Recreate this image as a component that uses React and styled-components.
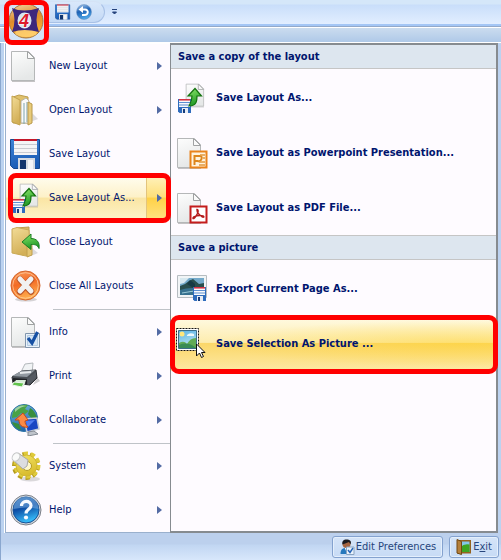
import React from "react";
import styled, { createGlobalStyle } from "styled-components";

const Paper = () => (
  <g>
    <path d="M2 31.5h23" stroke="#8a8a8a" strokeOpacity=".5" />
    <path d="M1.5 1.5h17l6 6v23h-23z" fill="url(#paperFill)" stroke="#b5b7b8" />
    <path d="M17.5 1.5v7h7z" fill="#fafafa" stroke="#a0a2a3" />
  </g>
);

const Floppy = () => (
  <g>
    <path d="M.5 1.5h29v29h-26l-3-3z" fill="url(#floppyFill)" stroke="#164a91" />
    <path d="M4 1h23v16H4z" fill="#f4f4f6" />
    <path d="M4 1h23v2H4z" fill="#c4162a" />
    <path d="M4 6.5h23M4 10.5h23M4 14.5h23" stroke="#c9cbd2" />
    <path d="M8 20h17v11H8z" fill="#d5dae2" />
    <path d="M10 22h6v9h-6z" fill="#12356e" />
    <path d="M18 22h5v9h-5z" fill="#f4f5f8" />
  </g>
);

const SmallFloppy = () => (
  <g>
    <path d="M0 0h13v14H1.500L0 12.500z" fill="#2f6cbd" />
    <path d="M1 0h11v8H1z" fill="#fafafc" />
    <path d="M1 .8h11" stroke="#d0283a" strokeWidth="1.500" />
    <path d="M1 3.500h11M1 6h11" stroke="#5d8fd0" />
    <path d="M4 9h6v5H4z" fill="#e7ecf4" />
    <path d="M5 10h2v4H5z" fill="#163c7c" />
  </g>
);

const NewIcon = () => <Paper />;

const OpenIcon = () => (
  <g>
    <path d="M20 28l8-3-6-6z" fill="#777" opacity=".25" />
    <path d="M3 3l6-2 9 2v26H3z" fill="#e0c06c" stroke="#bd9d4e" />
    <path d="M11 7l5-3 3 3v22h-8z" fill="#fafafa" stroke="#b6b3a8" />
    <path d="M14 9v21M17 8v20" stroke="#7da4ad" />
    <path d="M2 2l8 4v25l-8-3z" fill="url(#folderFill)" stroke="#c2a14e" />
    <path d="M18 8l4 2v19l-4 2z" fill="#e8ca79" stroke="#b9984a" />
  </g>
);

const SaveAsIcon = () => (
  <g>
    <g transform="translate(9 1) scale(.76)"><Paper /></g>
    <g transform="translate(2 17)"><SmallFloppy /></g>
    <path
      d="M13 24c8 0 8-6 8-10h4.500L19 6.500 12 14h4c0 5-1 7-3 10z"
      fill="url(#greenFill)"
      stroke="#14720f"
      strokeWidth="1.200"
    />
  </g>
);

const CloseIcon = () => (
  <g>
    <path d="M21 30l7-3-6-5z" fill="#777" opacity=".25" />
    <path d="M6 2l13-1v26l-6 2-7-2z" fill="#d9b862" stroke="#bd9b4c" />
    <path d="M2 3l5-1.500 12 2.500 1 25-4 1L2 27z" fill="url(#folderFill)" stroke="#c9aa58" />
    <path d="M17 20l5-2v11l-5 2z" fill="#e3c471" stroke="#c09f4d" />
    <path
      d="M12 16l9-8v4.500c6 0 9 4 8 10-2-4-4-4-8-4v5z"
      fill="url(#greenFill)"
      stroke="#1c7d24"
    />
  </g>
);

const CloseAllIcon = () => (
  <g>
    <ellipse cx="16" cy="29.500" rx="11" ry="2" fill="#999" opacity=".4" />
    <circle cx="15.500" cy="15.500" r="14.500" fill="url(#orangeFill)" stroke="#d3642c" />
    <circle cx="15.500" cy="15.500" r="12.800" fill="none" stroke="#ffd2ab" strokeOpacity=".7" />
    <path d="M10 9.500l11 12M21 9.500l-11 12" stroke="#b9552a" strokeWidth="6.500" strokeLinecap="round" />
    <path d="M10 9l11 12M21 9L10 21" stroke="#f2f2f2" strokeWidth="5" strokeLinecap="round" />
  </g>
);

const InfoIcon = () => (
  <g>
    <Paper />
    <path d="M15.500 17.500h14v14h-14z" fill="#eaf2fa" stroke="#8296ad" />
    <path d="M17.500 19.500h10v10h-10z" fill="#d7e6f5" stroke="#b4cbe1" />
    <path d="M18 22l4 5 5.500-11" fill="none" stroke="#1650a4" strokeWidth="3.200" />
  </g>
);

const PrintIcon = () => (
  <g>
    <path d="M23 25l7-4-3-4z" fill="#888" opacity=".4" />
    <path d="M11 12l4-8 8-1-1 11z" fill="#f1f3f5" stroke="#b4b8bc" />
    <path d="M2 17l10-6 14-1 1 8-7 7-17-2z" fill="#4b5057" stroke="#2d3035" />
    <path d="M2 16l9-5 14-1-8 7z" fill="#9299a1" />
    <path d="M10 13l11-1" stroke="#e7eaec" strokeWidth="2" />
    <path d="M3 18l14 1v5L3 22z" fill="#202226" />
    <path d="M17 19l9-7v6l-8 7z" fill="#555a62" />
    <path d="M6 20h10l-2 6-11-1z" fill="#d8ecd8" />
    <path d="M4 22l10 1-2 4-10-2z" fill="#62c34e" stroke="#eef5ee" />
  </g>
);

const CollaborateIcon = () => (
  <g>
    <circle cx="14" cy="14" r="13.500" fill="url(#globeFill)" stroke="#2c72a5" />
    <path d="M5 5c4-4 9-5 13-4l-3 4 4 2-5 4-3-2-4 4-5 1c0-4 1-7 3-9z" fill="#4aa246" />
    <path d="M20 4c5 3 7 8 7 12l-5-1-4-5zM2 18l7 2 2 6c-5-1-8-5-9-8z" fill="#388e3d" />
    <path d="M5 5q5-5 12-3-6 0-12 6z" fill="#c3e3c8" opacity=".7" />
    <path d="M14 15l13-1 2 11-12 3z" fill="#1946c3" stroke="#c7ced8" strokeWidth="1.500" />
    <path d="M16 17l9-1-8 8z" fill="#517df0" />
    <path d="M18 28l6-1 4 3-10 2z" fill="#bfc4cb" stroke="#848a94" />
    <path d="M5 16l8-7 5 7-3 1c0 3 1 4 3 6-6 1-9-2-9-7z" fill="#fb8a45" stroke="#c94a17" />
  </g>
);

const SystemIcon = () => (
  <g>
    <ellipse cx="20" cy="29" rx="10" ry="2.500" fill="#999" opacity=".35" />
    <circle cx="16" cy="16" r="11.500" fill="none" stroke="#b59b1d" strokeWidth="5" strokeDasharray="4 3.200" />
    <circle cx="17" cy="15" r="11" fill="none" stroke="#dfca3a" strokeWidth="5" strokeDasharray="4.100 2.800" />
    <circle cx="16.500" cy="15.500" r="10.500" fill="url(#gearFill)" stroke="#cfb632" />
    <circle cx="17" cy="16" r="4.500" fill="#fdf7cc" stroke="#b49b23" />
    <path d="M3 10l5-7 10 7-1 6-4 3z" fill="#dcdde0" stroke="#aaa" />
    <ellipse cx="6" cy="7" rx="3.500" ry="4.500" fill="#fafafa" stroke="#c4c5c7" transform="rotate(35 6 7)" />
  </g>
);

const HelpIcon = () => (
  <g>
    <circle cx="16" cy="16" r="15" fill="#d4d8df" stroke="#7b8089" />
    <circle cx="16" cy="16" r="13" fill="url(#helpFill)" stroke="#174f93" />
    <path d="M3.500 15a12.500 12.500 0 0125 0q-12-3-25 0z" fill="#82b3e4" opacity=".5" />
    <path d="M11.500 12c0-6 9.500-6 9.500-.5 0 4-5 3.500-5 8" fill="none" stroke="#f7faff" strokeWidth="3.200" />
    <circle cx="16" cy="23.500" r="2.100" fill="#f7faff" />
  </g>
);

const PptIcon = () => (
  <g>
    <Paper />
    <path d="M14.500 14.500h16v16h-16z" fill="#fff3df" stroke="#e9831c" strokeWidth="2" />
    <path d="M18.500 28v-9h5q3 0 2 3t-4 2h-2" fill="none" stroke="#dd861d" strokeWidth="2" />
    <path d="M24 18h5M27 21h2M23 25h6M23 28h6" stroke="#e2983c" strokeWidth="1.500" />
  </g>
);

const PdfIcon = () => (
  <g>
    <Paper />
    <path d="M14.500 14.500h16v16h-16z" fill="#fff" stroke="#c41d1d" strokeWidth="2" />
    <path
      d="M21 17.500c2 0 1 4-1 6.500-2 3-3 3-3 2 0-2 7-3 10-2 2 1 0 2-2 0-3-2-4-5-4-6.500z"
      fill="none"
      stroke="#b31b1b"
      strokeWidth="1.500"
    />
  </g>
);

const ExportIcon = () => (
  <g>
    <path d="M1.500 2.500h29v22h-29z" fill="#f1f4f6" stroke="#b6bcc1" />
    <path d="M4 5h24v17H4z" fill="#74a9ca" />
    <path d="M4 5h9l-5 5-4 1z" fill="#d7e8ef" />
    <path d="M4 13l5-2 4-3 4-2 6 5 5-1v7H4z" fill="#294e4d" />
    <path d="M11 11l3-4 5 4v5z" fill="#173a45" />
    <path d="M4 17q12-4 24 0v5H4z" fill="#37718f" />
    <path d="M6 20l12-2" stroke="#9dcbd9" />
    <g transform="translate(17 14)"><SmallFloppy /></g>
  </g>
);

const SelectionIcon = () => (
  <g transform="translate(-1 -1)">
    <path d="M1.500 1.500h22v22h-22z" fill="#fff" stroke="#111" strokeDasharray="2 1" />
    <path d="M3.500 3.500h18v18h-18z" fill="url(#skyFill)" stroke="#3c6e87" />
    <circle cx="7" cy="7" r="2.500" fill="#ffe77c" />
    <path d="M12 8q3-3 7-1v2h-7z" fill="#eef9fb" />
    <path d="M4 16q5-3 8 1 3-6 9-6v10H4z" fill="#62ab55" />
    <path d="M4 18q9-4 17 3H4z" fill="#398c54" />
    <path d="M21.500 17v12l3-3 2 4.500 2-1-2-4h3.500z" fill="#fff" stroke="#111" />
  </g>
);

const UndoIcon = () => (
  <g>
    <circle cx="16" cy="16" r="15" fill="url(#undoFill)" stroke="#668dbc" />
    <path d="M12 11h6c8 0 7 11-1 11h-5" fill="none" stroke="#fff" strokeWidth="4" />
    <path d="M5 11l9-7v14z" fill="#fff" />
  </g>
);

const UserIcon = () => (
  <g>
    <path d="M3 30c0-9 4-12 11-12s10 4 10 12z" fill="#2779bd" />
    <path d="M11 17l4 9 4-9z" fill="#fff" />
    <circle cx="15" cy="10" r="8" fill="#a66540" />
    <path d="M7 11C5 2 12 0 17 1c7 1 8 5 6 10l-3-5z" fill="#1b1b1f" />
    <path d="M15 16h15v15H15z" fill="#eaf3fb" stroke="#8aa4c0" strokeWidth="2" />
    <path d="M18 22l4 5 6-9" fill="none" stroke="#2766b8" strokeWidth="3" />
  </g>
);

const ExitIcon = () => (
  <g>
    <path d="M2 2h28v27H2z" fill="#94631f" />
    <path d="M8 5h19v21H8z" fill="#83c7e8" />
    <path d="M8 17q9-9 19-6v15H8z" fill="#3da622" />
    <path d="M2 1l9 4v26l-9-3z" fill="#b5803b" stroke="#704713" strokeWidth="2" />
  </g>
);

const LogoIcon = () => (
  <svg width="35" height="35" viewBox="0 0 35 35" aria-hidden="true">
    <circle cx="17" cy="16" r="17" fill="url(#logoFill)" stroke="#a17745" />
    <ellipse cx="17" cy="28" rx="11" ry="4" fill="#ffe08d" opacity=".6" />
    <path d="M3 3q11 5 27 0-5 12 0 24-15-4-27 0 5-12 0-24z" fill="#3c277c" />
    <ellipse cx="15.500" cy="15.500" rx="7" ry="8" fill="#d8e5f0" />
    <LogoDigit x="15" y="22" textAnchor="middle">4</LogoDigit>
  </svg>
);

const Gradient = ({ id, stops }) => (
  <linearGradient id={id} x1="0" y1="0" x2="0.300" y2="1">
    {stops.map((color, i) => (
      <stop key={i} offset={i / (stops.length - 1)} stopColor={color} />
    ))}
  </linearGradient>
);

const gradients = {
  paperFill: ["#fdfdfd", "#e6e8e8"],
  floppyFill: ["#3d83d6", "#1b5cb5"],
  folderFill: ["#f2dc97", "#d3af57"],
  greenFill: ["#8ee86c", "#1e9824"],
  orangeFill: ["#fba25f", "#f36a25", "#ffad4d"],
  globeFill: ["#74b8df", "#2467aa"],
  gearFill: ["#f2e264", "#d9bd2e"],
  helpFill: ["#3a77bd", "#0c4da5", "#35b7f5"],
  skyFill: ["#57b1e7", "#bce7ee"],
  undoFill: ["#b4d3f3", "#1d62b5", "#4ba3e5"],
  logoFill: ["#f3d7ad", "#dc8c2c", "#ffb132"],
};

const Icon = ({ size = 32, children }) => (
  <svg width={size} height={size} viewBox="0 0 32 32" aria-hidden="true">
    {children}
  </svg>
);

const menuGroups = [
  [
    { label: "New Layout", icon: <NewIcon />, more: true },
    { label: "Open Layout", icon: <OpenIcon />, more: true },
    { label: "Save Layout", icon: <Floppy /> },
    { label: "Save Layout As...", icon: <SaveAsIcon />, more: true, active: true },
    { label: "Close Layout", icon: <CloseIcon /> },
    { label: "Close All Layouts", icon: <CloseAllIcon /> },
  ],
  [
    { label: "Info", icon: <InfoIcon />, more: true },
    { label: "Print", icon: <PrintIcon />, more: true },
    { label: "Collaborate", icon: <CollaborateIcon />, more: true },
  ],
  [
    { label: "System", icon: <SystemIcon />, more: true },
    { label: "Help", icon: <HelpIcon />, more: true },
  ],
];

const sections = [
  {
    title: "Save a copy of the layout",
    items: [
      { label: "Save Layout As...", icon: <SaveAsIcon /> },
      { label: "Save Layout as Powerpoint Presentation...", icon: <PptIcon /> },
      { label: "Save Layout as PDF File...", icon: <PdfIcon /> },
    ],
  },
  {
    title: "Save a picture",
    items: [
      { label: "Export Current Page As...", icon: <ExportIcon /> },
      { label: "Save Selection As Picture ...", icon: <SelectionIcon />, active: true },
    ],
  },
];

const App = () => {
  return (
    <>
      <GlobalStyle />
      <Defs aria-hidden="true">
        <defs>
          {Object.entries(gradients).map(([id, stops]) => (
            <Gradient key={id} id={id} stops={stops} />
          ))}
        </defs>
      </Defs>
      <Window>
        <TitleBar>
          <QuickAccess>
            <ToolButton aria-label="Save"><Icon size={16}><Floppy /></Icon></ToolButton>
            <ToolButton aria-label="Undo"><Icon size={16}><UndoIcon /></Icon></ToolButton>
          </QuickAccess>
          <ToolButton aria-label="Customize">
            <svg width="7" height="7" viewBox="0 0 7 7" aria-hidden="true">
              <path d="M1 .5h5M1.500 3h4l-2 2z" fill="#24427c" stroke="#24427c" />
            </svg>
          </ToolButton>
        </TitleBar>
        <Ribbon />
        <AppButton aria-label="Application menu"><LogoIcon /></AppButton>
        <Body>
          <Menu>
            {menuGroups.map((group, i) => (
              <MenuGroup key={i}>
                {group.map(({ label, icon, more, active }) => (
                  <MenuItem key={label} $active={active}>
                    <Icon>{icon}</Icon>
                    <MenuLabel>{label}</MenuLabel>
                    {more && (
                      <More $active={active}>
                        <svg width="5" height="8" viewBox="0 0 5 8" aria-hidden="true">
                          <path d="M0 0l5 4-5 4z" fill="#536ba4" />
                        </svg>
                      </More>
                    )}
                  </MenuItem>
                ))}
              </MenuGroup>
            ))}
          </Menu>
          <Panel>
            {sections.map(({ title, items }) => (
              <section key={title}>
                <SectionTitle>{title}</SectionTitle>
                {items.map(({ label, icon, active }) => (
                  <PanelItem key={label} $active={active}>
                    <Icon>{icon}</Icon>
                    {label}
                  </PanelItem>
                ))}
              </section>
            ))}
          </Panel>
        </Body>
        <Footer>
          <FooterButton>
            <Icon size={16}><UserIcon /></Icon>
            <span>Edit Preferences</span>
          </FooterButton>
          <FooterButton>
            <Icon size={16}><ExitIcon /></Icon>
            <span>E<u>x</u>it</span>
          </FooterButton>
        </Footer>
      </Window>
    </>
  );
};

export default App;

const GlobalStyle = createGlobalStyle`
  *, *::before, *::after {
    box-sizing: border-box;
  }
  body {
    margin: 0;
    background: #bcd0ed;
  }
  button {
    margin: 0;
    padding: 0;
    border: none;
    background: none;
    color: inherit;
    font: inherit;
    text-align: left;
    cursor: pointer;
  }
  svg {
    display: block;
    flex-shrink: 0;
  }
`;
const Defs = styled.svg`
  position: absolute;
  width: 0;
  height: 0;
`;
const LogoDigit = styled.text`
  fill: #dc1b2e;
  stroke: #fff;
  stroke-width: 1px;
  paint-order: stroke;
  font: italic bold 18px "Liberation Sans", sans-serif;
`;
const Window = styled.div`
  position: relative;
  min-height: 100vh;
  display: flex;
  flex-direction: column;
  color: #00156e;
  font-family: "DejaVu Sans Condensed", "DejaVu Sans", sans-serif;
  font-size: 11px;
  line-height: 16px;
`;
const TitleBar = styled.header`
  display: flex;
  align-items: center;
  gap: 6px;
  height: 28px;
  padding: 0 0 4px 40px;
  background: linear-gradient(#d5e7f9 0 4px, #c9defa 5px, #e2eeff 24px, #a4c6f5 24px 26px, #93a9c9 26px 27px, #fff 27px);
`;
const QuickAccess = styled.div`
  display: flex;
  align-items: center;
  gap: 5px;
  height: 22px;
  padding: 0 12px 0 15px;
  border: 1px solid #a8c1e6;
  border-top-color: #d5e3f6;
  border-left: none;
  border-radius: 0 11px 11px 0;
  background: linear-gradient(#d9e8fb, #c4d9f5);
`;
const ToolButton = styled.button`
  display: flex;
`;
const Ribbon = styled.div`
  height: 15px;
  border-bottom: 1px solid #fff;
  background: linear-gradient(#cbdcef, #afc9e8);
`;
const AppButton = styled.button`
  position: absolute;
  z-index: 2;
  top: 0;
  left: 4px;
  display: flex;
  justify-content: center;
  align-items: center;
  width: 45px;
  height: 45px;
  border: 5px solid #ff0000;
  border-radius: 8px;
  background: #d4e3f6;
`;
const Body = styled.main`
  flex: 1;
  display: flex;
  padding: 0 3px 0 4px;
  border-left: 1px solid #8aa7cf;
  background: #bcd2f0;
`;
const Menu = styled.nav`
  flex: 0 0 165px;
  border: 1px solid #9ab0cd;
  border-right: none;
  border-top-color: #fff;
  background: #fefbff;
  box-shadow: -1px 0 #fff;
`;
const MenuGroup = styled.div`
  & + &::before {
    content: "";
    display: block;
    height: 2px;
    margin-left: 47px;
    border-bottom: 1px solid #bfc3c8;
  }
`;
const MenuItem = styled.button`
  position: relative;
  display: flex;
  align-items: center;
  gap: 7px;
  width: 100%;
  height: 44px;
  padding-left: 4px;
  background: ${(props) =>
    props.$active ? "linear-gradient(#fffdf0, #fdf1c8 48%, #fae5a3 50%, #fdf3c9)" : "none"};

  &::after {
    content: "";
    display: ${(props) => (props.$active ? "block" : "none")};
    position: absolute;
    z-index: 1;
    inset: -3px -1px -3px 2px;
    border: 5px solid #ff0000;
    border-radius: 8px;
  }
`;
const MenuLabel = styled.span`
  flex: 1;
  white-space: nowrap;
`;
const More = styled.span`
  display: flex;
  align-items: center;
  align-self: stretch;
  padding: 0 8px 0 10px;
  border-left: 1px solid ${(props) => (props.$active ? "#e3c47c" : "transparent")};
  background: ${(props) =>
    props.$active ? "linear-gradient(#fff2bd, #ffdf78 48%, #ffd146 50%, #ffe284)" : "none"};
`;
const Panel = styled.div`
  flex: 1;
  border: 2px solid #868b90;
  border-left-width: 1px;
  background: #fefbff;
  font-weight: bold;
`;
const SectionTitle = styled.h2`
  height: 24px;
  margin: 0 0 1px;
  padding: 4px 7px;
  border-bottom: 1px solid #c5c5c5;
  background: #dde6ef;
  font-size: inherit;

  section + section & {
    height: 25px;
    border-top: 1px solid #c5c5c5;
  }
`;
const PanelItem = styled.button`
  position: relative;
  display: flex;
  align-items: center;
  gap: 8px;
  width: 100%;
  height: 55px;
  padding-left: 5px;
  background: ${(props) =>
    props.$active
      ? "radial-gradient(ellipse at 90% 50%, #ffd22a77, transparent 60%), linear-gradient(#fffbe6, #fdecae 48%, #fbd769 50%, #fde9a5)"
      : "none"};

  &::after {
    content: "";
    display: ${(props) => (props.$active ? "block" : "none")};
    position: absolute;
    z-index: 1;
    inset: -1px -2px -3px -1px;
    border: 5px solid #ff0000;
    border-radius: 9px;
  }
`;
const Footer = styled.footer`
  display: flex;
  justify-content: flex-end;
  gap: 6px;
  height: 27px;
  padding: 3px 2px 2px;
  border-left: 1px solid #8aa7cf;
  background: linear-gradient(#bcd0ed 11px, #c1d6f2 12px, #d8e7fb);
`;
const FooterButton = styled.button`
  display: flex;
  align-items: center;
  gap: 1px;
  padding: 0 6px;
  border: 1px solid #84a2cf;
  border-radius: 3px;
  background: linear-gradient(#d5e4f8, #c7dbf5);
  box-shadow: inset 0 0 0 1px #e4effc;
  color: #27467d;
  white-space: nowrap;
`;
